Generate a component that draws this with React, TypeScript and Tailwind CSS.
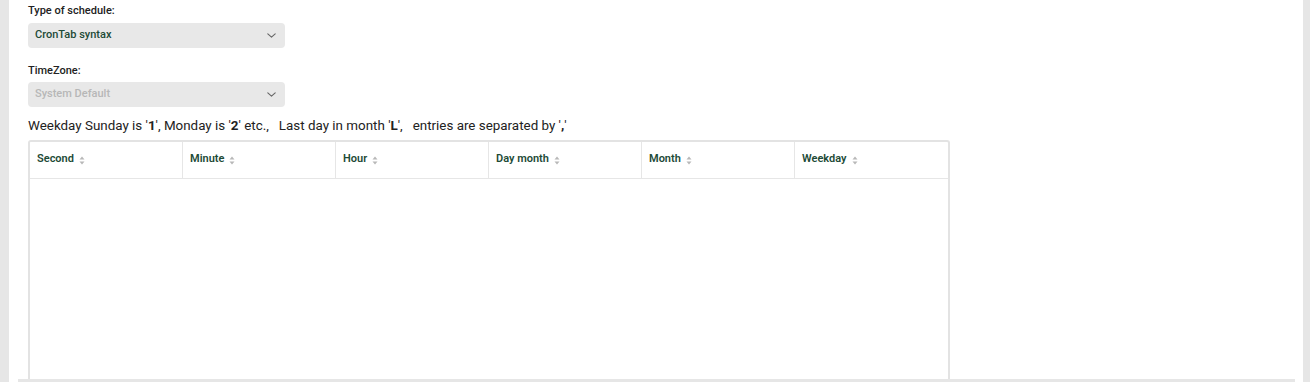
import React from "react";

const Chevron = () => (
  <svg width="9" height="5" viewBox="0 0 9 5" fill="none">
    <path d="M0.8 0.8l3.7 3.4 3.7-3.4" stroke="#666" strokeWidth="1.1" strokeLinecap="round" strokeLinejoin="round" />
  </svg>
);

const Sort = () => (
  <svg width="6" height="9" viewBox="0 0 6 9" className="ml-[5px] mt-[1px]">
    <path d="M3 0.5L5.5 3.5H0.5Z" fill="#b8b8b8" />
    <path d="M3 8.5L5.5 5.5H0.5Z" fill="#b8b8b8" />
  </svg>
);

const cols = ["Second", "Minute", "Hour", "Day month", "Month", "Weekday"];

export default function App() {
  return (
    <div
      className="flex h-[382px] w-[1310px] overflow-hidden bg-white"
      style={{ fontFamily: "Roboto, 'Liberation Sans', sans-serif" }}
    >
      <div className="w-[9px] shrink-0 bg-[#e6e6e6]" />
      <div className="flex flex-1 flex-col">
        <div className="flex flex-1 flex-col overflow-hidden pl-[19px]">
          <div className="mt-[4px] text-[11px] font-medium leading-[14px] text-[#222]">Type of schedule:</div>
          <div className="mt-[5px] flex h-[25px] w-[257px] items-center justify-between rounded-[4px] bg-[#e8e8e8] pl-[7px] pr-[9px]">
            <span className="text-[11px] font-medium text-[#1d4a36]">CronTab syntax</span>
            <Chevron />
          </div>
          <div className="mt-[16px] text-[11px] font-medium leading-[14px] text-[#222]">TimeZone:</div>
          <div className="mt-[4px] flex h-[25px] w-[257px] items-center justify-between rounded-[4px] bg-[#e8e8e8] pl-[7px] pr-[9px]">
            <span className="text-[11px] font-medium text-[#b7b7b7]">System Default</span>
            <Chevron />
          </div>
          <div className="mt-[10px] whitespace-pre text-[13.4px] leading-[18px] text-[#222]">
            Weekday Sunday is '<b>1</b>', Monday is '<b>2</b>' etc.,   Last day in month '<b>L</b>',   entries are separated by '<b>,</b>'
          </div>
          <div className="mt-[5px] flex w-[922px] flex-1 flex-col rounded-t-[3px] border-x-2 border-t-2 border-[#e3e3e3]">
            <div className="grid h-[37px] grid-cols-6 border-b border-[#e6e6e6]">
              {cols.map((c, i) => (
                <div
                  key={c}
                  className={`flex items-center pb-[1px] pl-[7px] ${i < 5 ? "border-r border-[#e6e6e6]" : ""}`}
                >
                  <span className="text-[11px] font-semibold text-[#1d4a36]">{c}</span>
                  <Sort />
                </div>
              ))}
            </div>
            <div className="flex-1" />
          </div>
        </div>
        <div className="ml-[9px] mr-[8px] h-[3px] shrink-0 bg-[#e6e6e6]" />
      </div>
      <div className="w-[7px] shrink-0 bg-[#e6e6e6]" />
    </div>
  );
}
